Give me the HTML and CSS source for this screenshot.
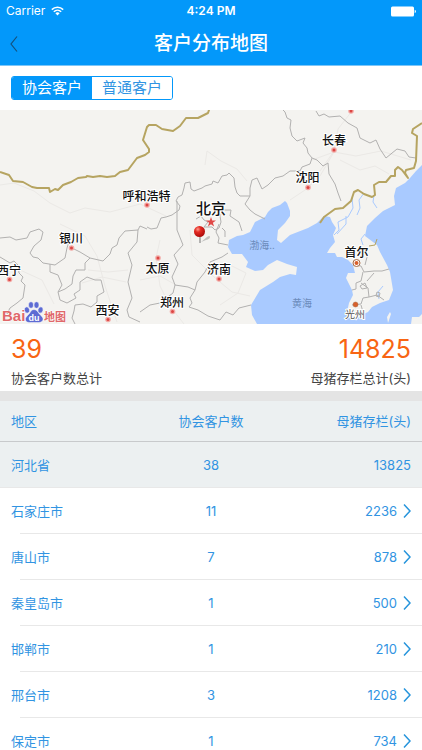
FILE: index.html
```html
<!DOCTYPE html>
<html lang="zh-CN">
<head>
<meta charset="utf-8">
<meta name="viewport" content="width=device-width, initial-scale=1">
<title>客户分布地图</title>
<link rel="stylesheet" href="styles.css">
</head>
<body>
<header class="top">
  <div class="status">
    <div class="carrier">
      <span>Carrier</span>
      <svg width="13" height="10" viewBox="0 0 13 10" fill="none" stroke="#fff" stroke-width="1.5" aria-hidden="true">
        <path d="M.8 3.6a8.2 8.2 0 0 1 11.4 0M2.8 5.7a5.4 5.4 0 0 1 7.4 0"/>
        <path d="M4.4 7.3a3 3 0 0 1 4.2 0L6.500 9.600z" fill="#fff" stroke="none"/>
      </svg>
    </div>
    <time class="clock">4:24 PM</time>
    <svg class="battery" width="25" height="11" viewBox="0 0 25 11" fill="#fff" aria-hidden="true">
      <rect x="0" y="0.500" width="23" height="10" rx="1.500"/>
      <path d="M23.700 3.800q1.200.3 1.200 1.700t-1.200 1.700z"/>
    </svg>
  </div>
  <nav class="nav">
    <button class="back" type="button" aria-label="返回">
      <svg width="8" height="16" viewBox="0 0 8 16" fill="none" stroke="#14507c" stroke-width="1.200"><path d="M7 .5 1 8l6 7.500"/></svg>
    </button>
    <h1>客户分布地图</h1>
  </nav>
</header>

<main>
  <div class="filter">
    <div class="segments">
      <button class="segment active" type="button" aria-pressed="true">协会客户</button>
      <button class="segment" type="button" aria-pressed="false">普通客户</button>
    </div>
  </div>

  <svg class="map" viewBox="0 0 422 214" role="img" aria-label="客户分布地图">
    <defs>
      <radialGradient id="pinHead" cx=".35" cy=".3" r=".75">
        <stop offset="0" stop-color="#ff9a8c"/><stop offset=".35" stop-color="#e42a22"/><stop offset="1" stop-color="#a90808"/>
      </radialGradient>
      <g id="dot"><circle r="2.800" fill="#f3a9a5"/><circle r="1.500" fill="#dc4543"/></g>
    </defs>
    <rect width="422" height="214" fill="#f4f3f0"/>

    <g class="roads">
      <path d="M0 75l14-2 20 8 16 12 20 10 15-5 25 4 30-8 26 12M60 114l25 12 12 20 8 30 12 36M20 160l22 10 12 24M88 160l20 2 20-2M82 173l20-6 24 5M160 130l-4 18 4 28M140 170l20-4 16 9M160 176l10 20 14 18M190 120l2 25 22 22 18 15 18 4M205 55l2-14 14 10 16 8 10 12M230 155l16 8-8 20-18 12M312 50l22-8 22 4 25-5 30 9M308 78l26-37 4-22 14-18M290 90l18-12 12-12 14-24M340 50l20 10 15-4 14 8"/>
    </g>

    <path class="sea" d="M422 55L416 61 410 68 405 73 396 78 394 86 395 95 383 101 375 108 367 116 365 126 377 135 380 142 387 155 390 162 393 180 389 190 380 193 372 197 368 202 357 207 348 208 347 202 349 193 353 185 352 180 346 168 348 163 355 163 353 155 348 150 342 147 337 147 335 143 327 143 330 138 335 132 333 125 336 118 332 112 330 107 324 106 317 113 308 118 290 125 281 133 277 130 278 120 285 113 290 106 290 101 287 93 285 91 280 95 272 98 268 102 265 107 255 112 250 122 243 125 237 126 229 130 228 137 232 144 242 144 248 152 246 157 255 161 263 160 268 155 277 150 287 154 297 157 296 165 290 164 280 167 273 172 260 180 251 195 252 205 257 214 422 214z"/>
    <path class="island" d="M387 207l3-5 1 2-3 9zM411 214l1-7 7 0 3-3v10z"/>

    <path class="river" d="M352 88l1 10-5 9-10 5 1 8-5 5M364 83l-5 7 1 8-3 7M374 85l-1 7 4 6M346 106l0 8-9 10M365 124l-4 5 2 6M383 176l-5 6 1 7"/>

    <g class="province">
      <path d="M147 117L151 119 157 118 161 108 166 107 172 105 179 100 180 96 176 91 178 87 182 85 184 78 185 73 190 72 191 79 194 81 202 78 205 76 212 74 213 71 218 73 222 66 227 65 229 63 234 68 235 77 237 83 240 86 250 86 250 78 252 70 257 68 262 79 268 75 275 68 283 66 290 61 300 61 302 57 310 54 312 48 308 43 307 38 303 33 305 28 297 31 292 26 290 18 291 10 287 8 285 2 283 0"/>
      <path d="M250 86l-5 8 5 6 5 4 10 5M312 48l5 2 6 6 5-3 1 11 6 10 3 9 3 8"/>
      <path d="M316 1l3 5 5-2 5 3 11-1 8 7 9 5 3 10 10 5 6-3 4 9 6 9 11-9 8 2 4 6 7 1"/>
      <path d="M0 147L10 153 14 151 18 155 19 163 23 167 21 171 25 175 23 188 17 193 10 198 7 204M0 128L10 127 16 130 27 128 30 122 39 119 43 122 41 130 34 136 30 143 33 147 38 148 43 153 55 155 65 148 67 138 70 128M72 138L80 142 90 148 85 153 85 160 76 160 73 166 72 174 65 179 58 182 60 190 67 193 76 188 74 184 80 180 80 172 87 167 95 170 101 170 104 182 97 186 97 192 91 197 83 194 75 195 74 201 72 208 75 214M50 154L50 162 58 165 62 175 58 182"/>
      <path d="M90 148L103 151 110 144 112 138 117 135 119 128 125 121 138 120 140 116 147 119M138 120L137 132 128 143 132 155 128 172 132 188 127 200 129 207 140 212"/>
      <path d="M177 91L177 120 183 135 174 145 178 154 172 167 175 175 173 183 160 193 150 195 140 202M175 175L188 177 195 180 197 172 205 162 210 152 222 147 228 143M195 180L190 188 192 193 189 197 198 200 208 206 220 210 226 202 233 205 239 198 251 195"/>
      <path d="M196 109l5-3 3 4 4 2-4 5 8 0 3 3 4-2 2-6-1-6 3-6 8 0-1 6 9 6 3 9M219 114l-3 8 3 6-1 5 10 2M222 118l3 3 0 6"/>
      <path d="M353 155l8 1 3 6 10-1 8 0 7-2M363 138l4 9-2 8M363 162l-2 9-5 2 0 6-4 1M361 173l7 5 1 9-6 1-2 6-9 1M369 187l8-2 7 5M367 171l7-8M360 176l5-3 2 5-5 1zM376 186l1-4 3 1-1 4zM361 195l2 7"/>
    </g>

    <g class="border">
      <path d="M0 62l9 3 4 6 10 1 9 5 5 1 12 0 1 4 5-3 3 1 5-5 8-3 7-4 8-1 1-1 6 1 7-1 7 1 8-1 5-4 8-2 9-12 8-3 4-3 0-3-6-9 4-13 2-2 7 0 6 4 11 2 7-5 6-8 12 0 10-5 2-6"/>
      <path d="M422 13l-9 6-1 4 5 3-1 25-2 7-8 2-1 3 3 5-6-8-4-3-3 3 0 6-4 0-5 6-7 0-5 3 1 10-3 2-8-3-6-4-4 2-3 9-8 7-8 1-11 8-4 6"/>
      <path d="M369 136l6-1 2-6" stroke-width="1"/>
    </g>

    <g class="markers">
      <use href="#dot" x="351" y="1"/><use href="#dot" x="334" y="40"/><use href="#dot" x="308" y="77.500"/>
      <use href="#dot" x="147" y="95"/><use href="#dot" x="71.500" y="138"/><use href="#dot" x="9.500" y="169.500"/>
      <use href="#dot" x="158" y="148"/><use href="#dot" x="219" y="169"/><use href="#dot" x="172.500" y="201.500"/><use href="#dot" x="108" y="209.500"/>
    </g>
    <circle cx="356.500" cy="153" r="3.500" fill="#fff" stroke="#a76a42"/><circle cx="356.500" cy="153" r="2" fill="#d8602c"/>
    <circle cx="355.500" cy="194.500" r="2.500" fill="#d8602c" stroke="#a76a42" stroke-width=".5"/>
    <path fill="#e04947" d="M211 107l1.200 3.600h3.800l-3.100 2.200 1.200 3.700-3.100-2.300-3.100 2.300 1.200-3.700-3.100-2.200h3.800z"/>

    <g class="city">
      <text x="334" y="35">长春</text><text x="307.500" y="72">沈阳</text><text x="146.500" y="91">呼和浩特</text>
      <text x="71" y="133">银川</text><text x="9" y="165">西宁</text><text x="157.500" y="162.500">太原</text>
      <text x="219" y="164">济南</text><text x="172" y="196.500">郑州</text><text x="107.500" y="205">西安</text>
      <text x="356.500" y="147">首尔</text>
      <text class="capital" x="211" y="104">北京</text>
      <text class="minor" x="355" y="208">光州</text>
    </g>
    <g class="water-name"><text x="262" y="139">渤海..</text><text x="302" y="197">黄海</text></g>

    <path d="M201 132l6-5q3-2 3 0t-4 3z" fill="#999" opacity=".55"/>
    <path d="M200 126v7" stroke="#888" stroke-width="1.200"/>
    <circle cx="199.500" cy="121.500" r="5.500" fill="url(#pinHead)"/>

    <g class="baidu">
      <text class="bai" x="2" y="211">Bai</text>
      <g fill="#5d6bd3" stroke="#fff" stroke-width=".5">
        <ellipse cx="27" cy="200" rx="2.500" ry="3.200" transform="rotate(-15 27 200)"/>
        <ellipse cx="31" cy="195" rx="2.500" ry="3.300"/>
        <ellipse cx="36.500" cy="195" rx="2.500" ry="3.300"/>
        <ellipse cx="40.500" cy="200" rx="2.500" ry="3.200" transform="rotate(15 40.500 200)"/>
        <path d="M34 199.500c3 0 4 3 6 5s3.500 3.500 3 5.500c-1 3-4 2.500-9 2.500s-8 .5-8.500-2.500c-.5-2 1-3.500 3-5.500s2.500-5 5.500-5z"/>
      </g>
      <text class="du" x="34" y="210.500">du</text>
      <text class="ditu" x="44" y="211">地图</text>
    </g>
  </svg>

  <section class="totals">
    <div class="total">
      <strong>39</strong>
      <span>协会客户数总计</span>
    </div>
    <div class="total end">
      <strong>14825</strong>
      <span>母猪存栏总计(头)</span>
    </div>
  </section>

  <table class="regions">
    <thead>
      <tr><th scope="col">地区</th><th scope="col">协会客户数</th><th scope="col">母猪存栏(头)</th></tr>
    </thead>
    <tbody>
      <tr class="province-row"><td>河北省</td><td>38</td><td>13825</td></tr>
      <tr><td>石家庄市</td><td>11</td><td><a href="#shijiazhuang">2236<svg class="chevron" viewBox="0 0 8 14"><path d="M1 .5 7 7l-6 6.500"/></svg></a></td></tr>
      <tr><td>唐山市</td><td>7</td><td><a href="#tangshan">878<svg class="chevron" viewBox="0 0 8 14"><path d="M1 .5 7 7l-6 6.500"/></svg></a></td></tr>
      <tr><td>秦皇岛市</td><td>1</td><td><a href="#qinhuangdao">500<svg class="chevron" viewBox="0 0 8 14"><path d="M1 .5 7 7l-6 6.500"/></svg></a></td></tr>
      <tr><td>邯郸市</td><td>1</td><td><a href="#handan">210<svg class="chevron" viewBox="0 0 8 14"><path d="M1 .5 7 7l-6 6.500"/></svg></a></td></tr>
      <tr><td>邢台市</td><td>3</td><td><a href="#xingtai">1208<svg class="chevron" viewBox="0 0 8 14"><path d="M1 .5 7 7l-6 6.500"/></svg></a></td></tr>
      <tr><td>保定市</td><td>1</td><td><a href="#baoding">734<svg class="chevron" viewBox="0 0 8 14"><path d="M1 .5 7 7l-6 6.500"/></svg></a></td></tr>
    </tbody>
  </table>
</main>
</body>
</html>
```
FILE: styles.css
```css
:root {
  --blue: #0398fa;
  --link: #3194e2;
  --orange: #f86513;
}

* { box-sizing: border-box; }

html { scrollbar-width: none; }

body {
  margin: 0;
  background: #fff;
  color: #444;
  font-family: Inter, "Noto Sans CJK SC", sans-serif;
  font-size: 13px;
  line-height: 20px;
}

button { font: inherit; padding: 0; cursor: pointer; }

.top { background: var(--blue); color: #fff; border-bottom: 1px solid #7cc6f8; }

.status {
  display: grid;
  grid-template-columns: 1fr auto 1fr;
  align-items: center;
  height: 22px;
  padding: 0 6px;
  font-size: 12px;
}
.carrier { display: flex; align-items: center; gap: 6px; }
.clock { font-weight: 600; }
.battery { justify-self: end; }

.nav {
  display: grid;
  grid-template-columns: 32px 1fr 32px;
  align-items: center;
  height: 43px;
}
.nav h1 { margin: 0; font-size: 19px; font-weight: 500; line-height: 28px; text-align: center; }
.back { height: 40px; padding-left: 10px; border: 0; background: none; text-align: left; }
.back svg { display: block; }

.filter { display: flex; padding: 10px 11px; }
.segments {
  display: flex;
  border: 1px solid var(--blue);
  border-radius: 3px;
  overflow: hidden;
}
.segment {
  width: 80px;
  height: 22px;
  border: 0;
  background: #fff;
  color: var(--link);
  font-size: 15px;
  line-height: 22px;
}
.segment.active { background: var(--blue); color: #fff; }

.map { display: block; width: 100%; }
.roads, .river, .province, .border { fill: none; stroke-linejoin: round; }
.roads { stroke: #ebe9e6; }
.sea { fill: #a9caff; }
.island { fill: #f4f3f0; }
.river { stroke: #a9caff; }
.province { stroke: #b2b1b0; }
.border { stroke: #b6a461; stroke-width: 2; }
.map text { font-family: "Noto Sans CJK SC", sans-serif; }
.city text {
  font-size: 12px;
  font-weight: 500;
  fill: #111;
  stroke: #fff;
  stroke-width: 2px;
  paint-order: stroke;
  text-anchor: middle;
}
.city .capital { font-size: 15px; }
.city .minor { font-size: 10px; font-weight: 400; fill: #555; }
.water-name text { font-size: 10px; fill: #6c8cbc; text-anchor: middle; }
.baidu text { stroke: #fff; stroke-width: 1px; paint-order: stroke; font-weight: 700; }
.baidu .bai { font-family: "Liberation Sans", sans-serif; font-size: 15px; fill: #e0686a; }
.baidu .du { font-family: "Liberation Sans", sans-serif; font-size: 9px; fill: #fff; stroke: none; text-anchor: middle; }
.baidu .ditu { font-size: 11px; fill: #e0686a; }

.totals {
  display: flex;
  justify-content: space-between;
  padding: 9px 11px 3px;
  border-bottom: 10px solid #e4e4e4;
}
.total { display: flex; flex-direction: column; gap: 3px; }
.total.end { align-items: flex-end; }
.total strong { color: var(--orange); font-size: 25px; font-weight: 400; line-height: 32px; }

.regions {
  width: 100%;
  table-layout: fixed;
  border-collapse: separate;
  border-spacing: 0;
  color: var(--link);
}
.regions th, .regions td {
  height: 46px;
  padding: 0 11px;
  border-bottom: 1px solid #e8e8e8;
  font-weight: 400;
  text-align: center;
}
.regions th { height: 41px; background: #ecf0f1; border-color: #c8cacc; }
.regions .province-row td { background: #ecf0f1; }
.regions th:first-child, .regions td:first-child { text-align: left; }
.regions th:last-child, .regions td:last-child { text-align: right; }
.regions tr:not(.province-row) td:first-child {
  border-bottom-color: transparent;
  background: linear-gradient(#e8e8e8, #e8e8e8) 20px 100% / 100% 1px no-repeat border-box;
}
.regions thead tr th:first-child {
  border-bottom-color: #c8cacc;
  background: #ecf0f1;
}
.regions a {
  display: flex;
  align-items: center;
  justify-content: flex-end;
  gap: 6px;
  color: inherit;
  text-decoration: none;
}
.chevron { width: 8px; height: 14px; fill: none; stroke: #2795dc; stroke-width: 1.5px; }
```
